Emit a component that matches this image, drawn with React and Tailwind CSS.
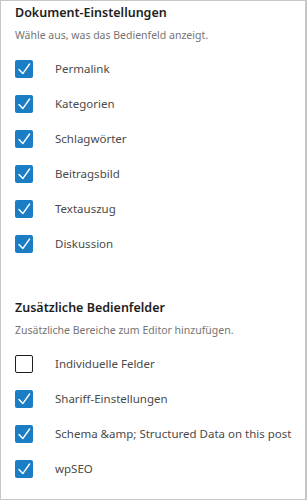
import React from "react";

const docItems = [
  { label: "Permalink", checked: true },
  { label: "Kategorien", checked: true },
  { label: "Schlagwörter", checked: true },
  { label: "Beitragsbild", checked: true },
  { label: "Textauszug", checked: true },
  { label: "Diskussion", checked: true },
];

const extraItems = [
  { label: "Individuelle Felder", checked: false },
  { label: "Shariff-Einstellungen", checked: true },
  { label: "Schema &amp; Structured Data on this post", checked: true },
  { label: "wpSEO", checked: true },
];

const Checkbox = ({ checked }) =>
  checked ? (
    <span className="flex h-[18px] w-[18px] flex-shrink-0 items-center justify-center rounded-[2px] bg-[#1b7dc4]">
      <svg width="18" height="18" viewBox="0 0 18 18" fill="none">
        <path d="M4 9.5 L7.8 13.6 L14.6 4" stroke="#fff" strokeWidth="1.4" strokeLinecap="round" strokeLinejoin="round" />
      </svg>
    </span>
  ) : (
    <span className="h-[18px] w-[18px] flex-shrink-0 rounded-[2px] border border-[#1e1e1e] bg-white" />
  );

const Section = ({ title, hint, items, className = "" }) => (
  <div className={className}>
    <h2 className="h-[20px] text-[12.5px] font-semibold leading-[20px] text-[#1e1e1e]">{title}</h2>
    <p className="mt-[4px] h-[16px] text-[10.5px] leading-[16px] text-[#757575]">{hint}</p>
    <ul className="mt-[8px]">
      {items.map((item) => (
        <li key={item.label} className="flex h-[35px] items-center">
          <Checkbox checked={item.checked} />
          <span className="ml-[22px] whitespace-nowrap text-[11.5px] text-[#4a4a4a]">{item.label}</span>
        </li>
      ))}
    </ul>
  </div>
);

export default function App() {
  return (
    <div
      className="h-[500px] w-[307px] overflow-hidden border border-r-2 border-[#c6c6c6] bg-white pl-[14px] pt-[2px]"
      style={{ fontFamily: '"Noto Sans", "Open Sans", sans-serif' }}
    >
      <Section
        title="Dokument-Einstellungen"
        hint="Wähle aus, was das Bedienfeld anzeigt."
        items={docItems}
      />
      <Section
        className="mt-[37px]"
        title="Zusätzliche Bedienfelder"
        hint="Zusätzliche Bereiche zum Editor hinzufügen."
        items={extraItems}
      />
    </div>
  );
}
